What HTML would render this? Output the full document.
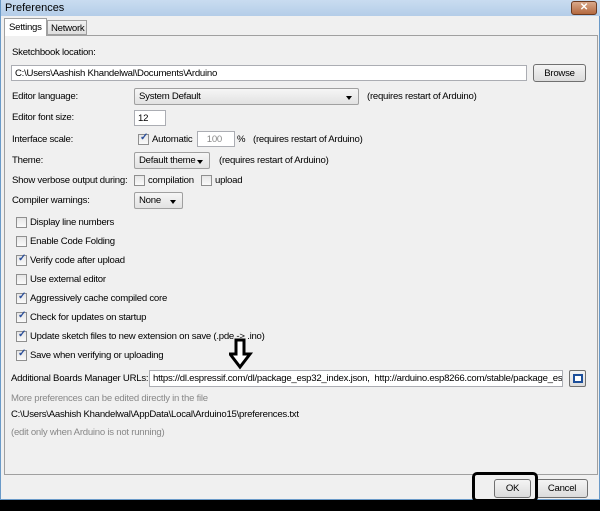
<!DOCTYPE html><html><head><style>
*{margin:0;padding:0;box-sizing:border-box}
body{width:600px;height:511px;background:#000;font-family:"Liberation Sans",sans-serif;font-size:9.6px;letter-spacing:-0.25px;color:#000;position:relative;overflow:hidden}
.win{position:absolute;left:0;top:0;width:600px;height:500px;background:#f0f0f0;border:1px solid #6a9ac8;border-top:none}
.title{position:absolute;left:0;top:0;width:600px;height:16px;background:linear-gradient(#c9dcf0,#b4cde8);font-size:11px;letter-spacing:0;padding:2px 0 0 4px}
.a{position:absolute;white-space:nowrap}
.panel{position:absolute;left:3px;top:35px;width:594px;height:440px;border:1px solid #a0a0a0;background:#f0f0f0}
.field{position:absolute;background:#fff;border:1px solid #abadb3;padding:2px 3px;white-space:nowrap;overflow:hidden}
.btn{position:absolute;border:1px solid #707070;border-radius:3px;background:linear-gradient(#f4f4f4,#dcdcdc);text-align:center;padding-top:3px}
.dd{position:absolute;border:1px solid #a0a0a0;border-radius:2px;background:linear-gradient(#f6f6f6,#e2e2e2);padding:2px 4px;white-space:nowrap}
.dd:after{content:"";position:absolute;right:6px;top:7px;border:3px solid transparent;border-top:4px solid #000}
.cb{position:absolute;width:11px;height:11px;border:1px solid #8f8f8f;background:linear-gradient(#e6e6e6,#fafafa)}
.cb.c:after{content:"✓";position:absolute;left:1px;top:-3px;font-size:10px;color:#2a4e9a;font-weight:bold}
.g{color:#888}
</style></head><body>
<div class="win">
<div class="title">Preferences</div>
<div class="a" style="left:570px;top:1px;width:26px;height:14px;background:linear-gradient(#d9a88a,#b4693f);border:1px solid #6b3a20;border-radius:3px;color:#fff;text-align:center;font-size:10px;font-weight:bold;line-height:12px">✕</div>
<div class="a" style="left:3px;top:18px;width:43px;height:18px;background:#fff;border:1px solid #a0a0a0;border-bottom:none;z-index:2;padding:3px 0 0 4px">Settings</div>
<div class="a" style="left:46px;top:20px;width:40px;height:15px;background:linear-gradient(#f2f2f2,#dedede);border:1px solid #a0a0a0;padding:2px 0 0 3px">Network</div>
<div class="panel"></div>
<div class="a" style="left:11px;top:47px">Sketchbook location:</div>
<div class="field" style="left:10px;top:65px;width:516px;height:16px">C:\Users\Aashish Khandelwal\Documents\Arduino</div>
<div class="btn" style="left:532px;top:64px;width:53px;height:18px">Browse</div>
<div class="a" style="left:11px;top:91px">Editor language:</div>
<div class="dd" style="left:133px;top:88px;width:225px;height:17px">System Default</div>
<div class="a" style="left:366px;top:91px">(requires restart of Arduino)</div>
<div class="a" style="left:11px;top:112px">Editor font size:</div>
<div class="field" style="left:133px;top:110px;width:32px;height:16px">12</div>
<div class="a" style="left:11px;top:134px">Interface scale:</div>
<div class="cb c" style="left:137px;top:134px"></div>
<div class="a" style="left:151px;top:134px">Automatic</div>
<div class="field g" style="left:196px;top:131px;width:38px;height:16px;text-align:right;padding-right:12px">100</div>
<div class="a" style="left:236px;top:134px">%</div>
<div class="a" style="left:252px;top:134px">(requires restart of Arduino)</div>
<div class="a" style="left:11px;top:155px">Theme:</div>
<div class="dd" style="left:133px;top:152px;width:76px;height:17px">Default theme</div>
<div class="a" style="left:218px;top:155px">(requires restart of Arduino)</div>
<div class="a" style="left:11px;top:175px">Show verbose output during:</div>
<div class="cb" style="left:133px;top:175px"></div>
<div class="a" style="left:147px;top:175px">compilation</div>
<div class="cb" style="left:200px;top:175px"></div>
<div class="a" style="left:214px;top:175px">upload</div>
<div class="a" style="left:11px;top:195px">Compiler warnings:</div>
<div class="dd" style="left:133px;top:192px;width:49px;height:17px">None</div>
<div class="cb" style="left:15px;top:217px"></div><div class="a" style="left:29px;top:217px">Display line numbers</div>
<div class="cb" style="left:15px;top:236px"></div><div class="a" style="left:29px;top:236px">Enable Code Folding</div>
<div class="cb c" style="left:15px;top:255px"></div><div class="a" style="left:29px;top:255px">Verify code after upload</div>
<div class="cb" style="left:15px;top:274px"></div><div class="a" style="left:29px;top:274px">Use external editor</div>
<div class="cb c" style="left:15px;top:293px"></div><div class="a" style="left:29px;top:293px">Aggressively cache compiled core</div>
<div class="cb c" style="left:15px;top:312px"></div><div class="a" style="left:29px;top:312px">Check for updates on startup</div>
<div class="cb c" style="left:15px;top:331px"></div><div class="a" style="left:29px;top:331px">Update sketch files to new extension on save (.pde -&gt; .ino)</div>
<div class="cb c" style="left:15px;top:350px"></div><div class="a" style="left:29px;top:350px">Save when verifying or uploading</div>
<div class="a" style="left:10px;top:373px">Additional Boards Manager URLs:</div>
<div class="field" style="left:148px;top:370px;width:414px;height:17px">https://dl.espressif.com/dl/package_esp32_index.json,&nbsp; http://arduino.esp8266.com/stable/package_esp8266com_index.json</div>
<div class="a" style="left:568px;top:370px;width:17px;height:17px;border:1px solid #707070;border-radius:2px;background:linear-gradient(#f4f4f4,#dcdcdc)"><div style="position:absolute;left:3px;top:3px;width:10px;height:9px;border:2px solid #1d4f9a;background:#fff"></div></div>
<div class="a g" style="left:10px;top:393px">More preferences can be edited directly in the file</div>
<div class="a" style="left:10px;top:409px">C:\Users\Aashish Khandelwal\AppData\Local\Arduino15\preferences.txt</div>
<div class="a g" style="left:10px;top:427px">(edit only when Arduino is not running)</div>
<svg class="a" style="left:228px;top:338px" width="26" height="32"><path d="M7 2H15V16H21L11 29L1 16H7Z" fill="#fff" stroke="#000" stroke-width="3" stroke-linejoin="miter"/></svg>
<div class="btn" style="left:493px;top:479px;width:37px;height:19px">OK</div>
<div class="btn" style="left:535px;top:479px;width:52px;height:19px">Cancel</div>
<div class="a" style="left:471px;top:472px;width:66px;height:30px;border:3px solid #000;border-radius:5px"></div>
</div>
</body></html>
